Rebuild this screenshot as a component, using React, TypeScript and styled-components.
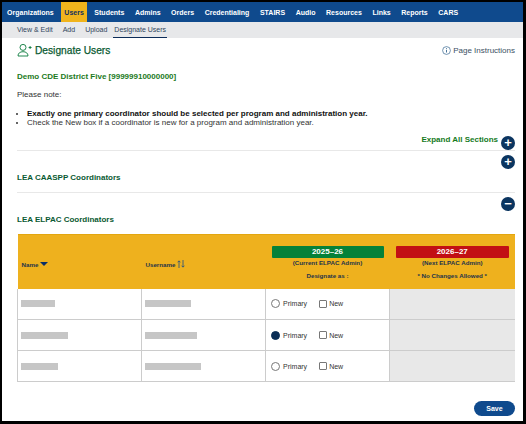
import styled, { createGlobalStyle } from "styled-components";

const GlobalStyle = createGlobalStyle`
  html, body {
    margin: 0;
    padding: 0;
    background: #000;
  }
  body {
    font-family: "Liberation Sans", Arial, sans-serif;
    color: #333;
  }
`;

const navItems = [
  "Organizations",
  "Users",
  "Students",
  "Admins",
  "Orders",
  "Credentialing",
  "STAIRS",
  "Audio",
  "Resources",
  "Links",
  "Reports",
  "CARS",
];

const subItems = ["View & Edit", "Add", "Upload", "Designate Users"];

const rows = [
  { name: 34, user: 46, selected: false },
  { name: 47, user: 52, selected: true },
  { name: 37, user: 56, selected: false },
];

const UserPlusIcon = () => (
  <svg width="15" height="14" viewBox="0 0 15 14" fill="none" stroke="#0a7a3c" strokeWidth="0.9">
    <circle cx="6" cy="4.4" r="3" />
    <path d="M1 13c0-2.8 2-4.300 5-4.300s5 1.500 5 4.300z" />
    <path d="M11.600 4.500h3M13.100 3v3" />
  </svg>
);

const InfoIcon = () => (
  <svg width="9" height="9" viewBox="0 0 9 9" fill="none" stroke="#35658f" strokeWidth="0.7">
    <circle cx="4.500" cy="4.500" r="3.900" />
    <path d="M4.500 3.800v2.700M4.500 2.200v0.800" strokeWidth="0.9" />
  </svg>
);

const App = () => {
  return (
    <>
      <GlobalStyle />
      <Frame>
        <Nav>
          {navItems.map((item) => (
            <NavItem key={item} $active={item === "Users"}>
              {item}
            </NavItem>
          ))}
        </Nav>
        <SubNav>
          {subItems.map((item) => (
            <SubItem key={item} $active={item === "Designate Users"}>
              {item}
            </SubItem>
          ))}
        </SubNav>
        <Content>
          <TitleRow>
            <Title>
              <UserPlusIcon />
              <span>Designate Users</span>
            </Title>
            <Instructions>
              <InfoIcon />
              <span>Page Instructions</span>
            </Instructions>
          </TitleRow>
          <District>Demo CDE District Five [99999910000000]</District>
          <Note>Please note:</Note>
          <Bullets>
            <li>
              <strong>Exactly one primary coordinator should be selected per program and administration year.</strong>
            </li>
            <li>Check the New box if a coordinator is new for a program and administration year.</li>
          </Bullets>
          <ExpandRow>
            <ExpandLabel>Expand All Sections</ExpandLabel>
            <RoundButton>+</RoundButton>
          </ExpandRow>
          <Section>
            <SectionTop>
              <RoundButton>+</RoundButton>
            </SectionTop>
            <SectionTitle>LEA CAASPP Coordinators</SectionTitle>
          </Section>
          <Section>
            <SectionTop>
              <RoundButton>&minus;</RoundButton>
            </SectionTop>
            <SectionTitle>LEA ELPAC Coordinators</SectionTitle>
          </Section>
          <Table>
            <thead>
              <tr>
                <HeadCell $width={124}>
                  <SortLabel>
                    Name
                    <svg width="8" height="4" viewBox="0 0 8 4">
                      <path d="M0 0h8L4 4z" fill="#0b2f66" />
                    </svg>
                  </SortLabel>
                </HeadCell>
                <HeadCell $width={124}>
                  <SortLabel>
                    Username
                    <svg width="8" height="8" viewBox="0 0 8 8" fill="none" stroke="#1f4f80" strokeWidth="0.8">
                      <path d="M2 8V1M0.600 2.300L2 0.800l1.400 1.500M6 0v7M4.600 5.700L6 7.200l1.400-1.500" />
                    </svg>
                  </SortLabel>
                </HeadCell>
                <YearCell $width={124}>
                  <YearBadge $color="#058139">2025&ndash;26</YearBadge>
                  <YearNote>(Current ELPAC Admin)</YearNote>
                  <YearNote $gap>Designate as :</YearNote>
                </YearCell>
                <YearCell>
                  <YearBadge $color="#c20f14">2026&ndash;27</YearBadge>
                  <YearNote>(Next ELPAC Admin)</YearNote>
                  <YearNote $gap>* No Changes Allowed *</YearNote>
                </YearCell>
              </tr>
            </thead>
            <tbody>
              {rows.map((row, i) => (
                <tr key={i}>
                  <BodyCell>
                    <Redacted style={{ width: row.name }} />
                  </BodyCell>
                  <BodyCell>
                    <Redacted style={{ width: row.user }} />
                  </BodyCell>
                  <BodyCell>
                    <Choices>
                      <Radio $checked={row.selected} />
                      <ChoiceText>Primary</ChoiceText>
                      <Check />
                      <ChoiceText>New</ChoiceText>
                    </Choices>
                  </BodyCell>
                  <DisabledCell />
                </tr>
              ))}
            </tbody>
          </Table>
          <Footer>
            <SaveButton>Save</SaveButton>
          </Footer>
        </Content>
      </Frame>
    </>
  );
};

const Frame = styled.div`
  box-sizing: border-box;
  width: 526px;
  height: 424px;
  border: solid #000;
  border-width: 2px 3px 3px 2px;
  background: #fff;
  overflow: hidden;
`;

const Nav = styled.nav`
  display: flex;
  height: 20px;
  background: #0f4a8d;
`;

const NavItem = styled.div<{ $active?: boolean }>`
  display: flex;
  align-items: center;
  margin: 0 1.900px;
  padding: 0 3.400px;
  font-size: 7px;
  font-weight: 700;
  color: ${(p) => (p.$active ? "#12305f" : "#fff")};
  background: ${(p) => (p.$active ? "#f0b41c" : "transparent")};

  &:first-child {
    margin-left: 1.700px;
  }
`;

const SubNav = styled.div`
  display: flex;
  gap: 8px;
  height: 16px;
  padding-left: 14px;
  background: #e7e8ea;
`;

const SubItem = styled.div<{ $active?: boolean }>`
  box-sizing: border-box;
  height: 16px;
  line-height: 15px;
  font-size: 7px;
  color: #30465c;
  padding: 0 1px;
  margin-left: ${(p) => (p.$active ? "-3px" : "0")};
  border-bottom: ${(p) => (p.$active ? "1.500px solid #0c2c58" : "none")};
`;

const Content = styled.main`
  padding: 0 8px 0 15px;
`;

const TitleRow = styled.div`
  display: flex;
  justify-content: space-between;
  align-items: center;
  height: 24px;
`;

const Title = styled.h1`
  display: flex;
  align-items: center;
  gap: 3px;
  margin: 0;
  font-size: 10.200px;
  font-weight: 400;
  color: #0a5a32;
  -webkit-text-stroke: 0.25px #0a5a32;
`;

const Instructions = styled.div`
  display: flex;
  align-items: center;
  gap: 2px;
  font-size: 8px;
  color: #3b4f63;
`;

const District = styled.div`
  margin-top: 10px;
  font-size: 8px;
  font-weight: 700;
  line-height: 10px;
  color: #1c7a1c;
`;

const Note = styled.p`
  margin: 8px 0 0;
  font-size: 8px;
  line-height: 10px;
  color: #333;
`;

const Bullets = styled.ul`
  margin: 9px 0 0;
  padding: 0 0 0 10px;
  font-size: 8px;
  line-height: 9px;
  color: #333;

  strong {
    color: #111;
  }
`;

const ExpandRow = styled.div`
  display: flex;
  justify-content: flex-end;
  align-items: flex-start;
  gap: 3px;
  margin-top: 9px;
  height: 14px;
`;

const ExpandLabel = styled.span`
  font-size: 8px;
  font-weight: 700;
  line-height: 10px;
  margin-top: -1px;
  color: #157a1c;
`;

const RoundButton = styled.span`
  display: flex;
  align-items: center;
  justify-content: center;
  width: 14px;
  height: 14px;
  border-radius: 50%;
  background: #0b3560;
  color: #fff;
  font-size: 13px;
  font-weight: 700;
  line-height: 14px;
`;

const Section = styled.section`
  box-sizing: border-box;
  height: 42px;
  padding-top: 4px;
  border-top: 1px solid #e8e8e8;
`;

const SectionTop = styled.div`
  display: flex;
  justify-content: flex-end;
  height: 14px;
`;

const SectionTitle = styled.h2`
  margin: 4px 0 0;
  font-size: 8px;
  font-weight: 700;
  line-height: 10px;
  color: #0a5a32;
`;

const Table = styled.table`
  table-layout: fixed;
  width: 498px;
  border-collapse: collapse;
  border-bottom: 1px solid #ddd;
`;

const HeadCell = styled.th<{ $width?: number }>`
  box-sizing: border-box;
  width: ${(p) => (p.$width ? `${p.$width}px` : "auto")};
  height: 54px;
  padding: 0 0 0 4px;
  background: #eeb11e;
  border-top: 1px solid #e3a60f;
  text-align: left;
  vertical-align: middle;
`;

const SortLabel = styled.span`
  display: inline-flex;
  align-items: center;
  gap: 2px;
  font-size: 6.200px;
  font-weight: 700;
  color: #24344a;
`;

const YearCell = styled.th<{ $width?: number }>`
  box-sizing: border-box;
  width: ${(p) => (p.$width ? `${p.$width}px` : "auto")};
  height: 54px;
  padding: 0 6px;
  background: #eeb11e;
  border-top: 1px solid #e3a60f;
  text-align: center;
  vertical-align: top;
`;

const YearBadge = styled.div<{ $color: string }>`
  margin-top: 11px;
  height: 12px;
  line-height: 12px;
  font-size: 8px;
  font-weight: 700;
  color: #fff;
  border-radius: 1px;
  background: ${(p) => p.$color};
`;

const YearNote = styled.div<{ $gap?: boolean }>`
  margin-top: ${(p) => (p.$gap ? "4.500px" : "1px")};
  font-size: 6.200px;
  font-weight: 700;
  line-height: 8px;
  color: #24344a;
`;

const BodyCell = styled.td`
  box-sizing: border-box;
  height: 31px;
  padding: 0 0 0 3px;
  border: 1px solid #ccc;
  border-top: none;
  vertical-align: middle;
`;

const DisabledCell = styled(BodyCell)`
  background: #e8e8e8;
  border-right: none;
`;

const Redacted = styled.div`
  height: 7px;
  background: #c6c6c6;
  filter: blur(0.6px);
`;

const Choices = styled.div`
  display: flex;
  align-items: center;
  padding-left: 2px;
`;

const Radio = styled.span<{ $checked?: boolean }>`
  box-sizing: border-box;
  width: 9px;
  height: 9px;
  border-radius: 50%;
  border: 1px solid ${(p) => (p.$checked ? "#0b2f56" : "#777")};
  background: ${(p) => (p.$checked ? "#0b2f56" : "#fff")};
  margin-right: 3px;
`;

const Check = styled.span`
  box-sizing: border-box;
  width: 8px;
  height: 8px;
  margin-left: 12px;
  margin-right: 2px;
  border: 1px solid #777;
  border-radius: 1px;
`;

const ChoiceText = styled.span`
  font-size: 7px;
  color: #333;
`;

const Footer = styled.div`
  display: flex;
  justify-content: flex-end;
  margin-top: 19px;
`;

const SaveButton = styled.button`
  width: 41px;
  height: 15px;
  padding: 0;
  border: none;
  border-radius: 8px;
  background: #0f4a8d;
  color: #fff;
  font-family: inherit;
  font-size: 7px;
  font-weight: 700;
`;

export default App;
